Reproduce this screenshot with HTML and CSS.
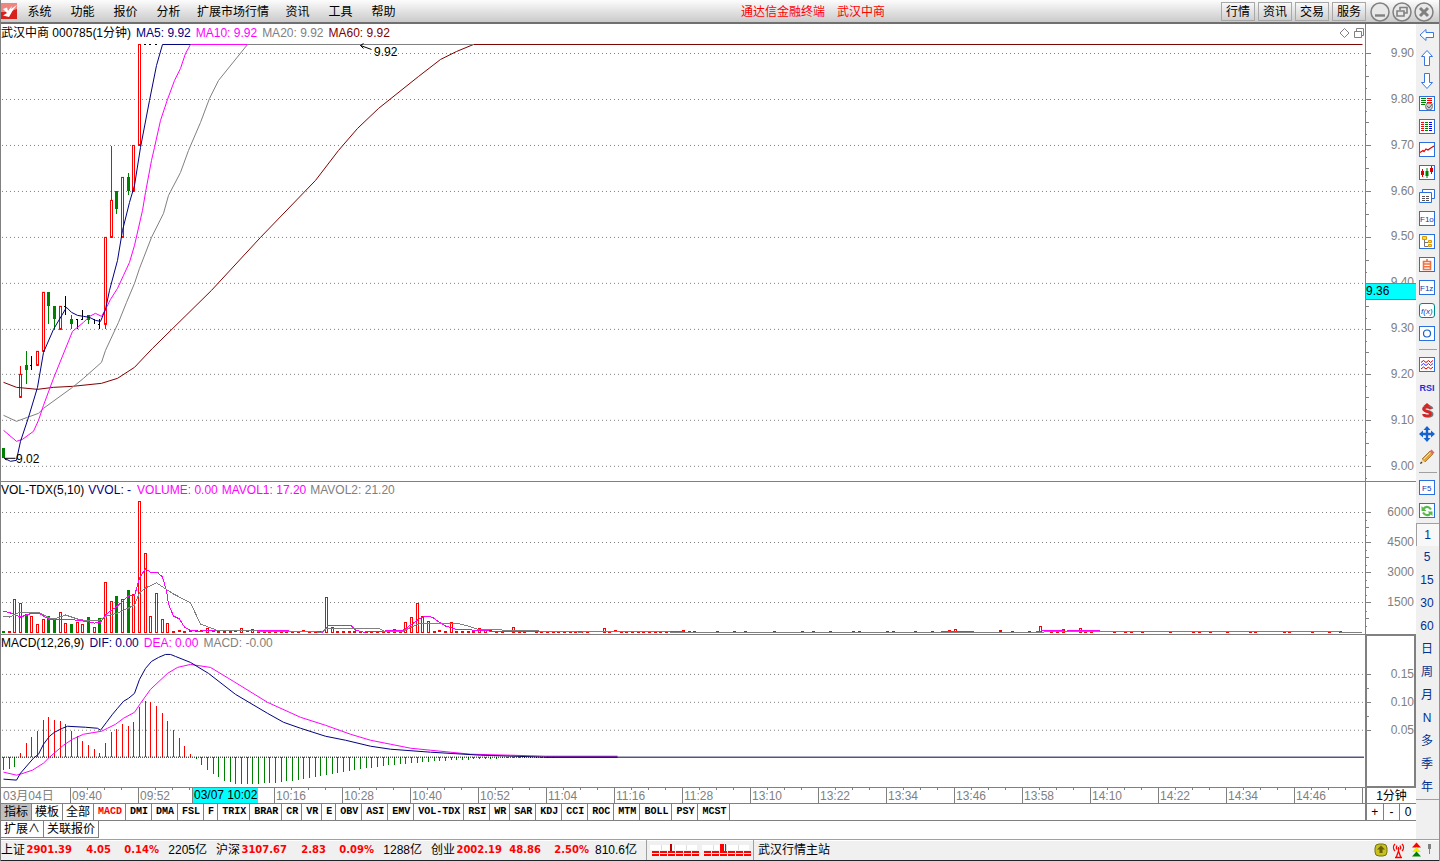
FILE: index.html
```html
<!DOCTYPE html>
<html lang="zh-CN">
<head>
<meta charset="utf-8">
<title>通达信金融终端 武汉中商</title>
<link rel="stylesheet" href="styles.css">
</head>
<body>
<header class="titlebar">
  <svg class="logo" viewBox="0 0 16 16" aria-hidden="true"><rect width="16" height="16" fill="#d8201c"/><path d="M0 0H16V6L8 9L0 9Z" fill="#ee8580"/><path d="M2 6L6 4.500L7 8L11 3L10 6L16 2L12 7L8 14L2 12.500L6 10Z" fill="#fff"/></svg>
  <nav class="menu">
    <button>系统</button><button>功能</button><button>报价</button><button>分析</button><button>扩展市场行情</button><button>资讯</button><button>工具</button><button>帮助</button>
  </nav>
  <h1 class="title"><span>通达信金融终端</span><span>武汉中商</span></h1>
  <div class="quick">
    <button>行情</button><button>资讯</button><button>交易</button><button>服务</button>
  </div>
  <div class="window-buttons">
    <button aria-label="最小化"><svg viewBox="0 0 20 20"><circle cx="10" cy="10" r="9" /><path d="M5 13.5H15" stroke-width="2.4"/></svg></button>
    <button aria-label="还原"><svg viewBox="0 0 20 20"><circle cx="10" cy="10" r="9"/><path d="M8 8V5.500H15V11H12M5 9H12V14H5Z" stroke-width="1.6"/></svg></button>
    <button aria-label="关闭"><svg viewBox="0 0 20 20"><circle cx="10" cy="10" r="9"/><path d="M6 6L14 14M14 6L6 14" stroke-width="3"/></svg></button>
  </div>
</header>

<main class="workspace">
  <div class="charts">
    <section class="panel panel-price">
      <svg class="plot" id="price" viewBox="1 24 1364 457" preserveAspectRatio="none"></svg>
      <div class="legend">
        <span>武汉中商 000785(1分钟)</span><span class="navy">MA5: 9.92</span><span class="pink">MA10: 9.92</span><span class="gray">MA20: 9.92</span><span class="maroon">MA60: 9.92</span>
        <svg class="corner" viewBox="0 0 26 12" aria-hidden="true"><path d="M5.500 1.500L10 6L5.500 10.500L1 6ZM15.500 4.500H22.500V10.500H15.500ZM17.500 4V1.500H24.500V8.500H23"/></svg>
      </div>
      <span class="note note-high">9.92</span>
      <span class="note note-low">9.02</span>
      <div class="axis">
        <svg class="ticks" id="price-axis" viewBox="1365 24 51 457" preserveAspectRatio="none"></svg>
        <ol class="scale scale-price"><li>9.90</li><li>9.80</li><li>9.70</li><li>9.60</li><li>9.50</li><li>9.40</li><li>9.30</li><li>9.20</li><li>9.10</li><li>9.00</li></ol>
        <span class="cursor-price">9.36</span>
      </div>
    </section>
    <section class="panel panel-volume">
      <svg class="plot" id="volume" viewBox="1 482 1364 152" preserveAspectRatio="none"></svg>
      <div class="legend"><span>VOL-TDX(5,10)</span><span class="navy wide">VVOL: -</span><span class="pink">VOLUME: 0.00</span><span class="pink">MAVOL1: 17.20</span><span class="gray">MAVOL2: 21.20</span></div>
      <div class="axis">
        <svg class="ticks" id="volume-axis" viewBox="1365 482 51 152" preserveAspectRatio="none"></svg>
        <ol class="scale scale-volume"><li>6000</li><li>4500</li><li>3000</li><li>1500</li></ol>
      </div>
    </section>
    <section class="panel panel-macd">
      <svg class="plot" id="macd" viewBox="1 635 1364 152" preserveAspectRatio="none"></svg>
      <div class="legend"><span>MACD(12,26,9)</span><span class="navy">DIF: 0.00</span><span class="pink">DEA: 0.00</span><span class="gray">MACD: -0.00</span></div>
      <div class="axis axis-boxed">
        <svg class="ticks" id="macd-axis" viewBox="1365 635 51 152" preserveAspectRatio="none"></svg>
        <ol class="scale scale-macd"><li>0.15</li><li>0.10</li><li>0.05</li></ol>
      </div>
    </section>
    <div class="timeline">
      <ol class="times">
        <li class="date">03月04日</li><li>09:40</li><li>09:52</li><li><span class="cursor-time">03/07 10:02</span></li><li>10:16</li><li>10:28</li><li>10:40</li><li>10:52</li><li>11:04</li><li>11:16</li><li>11:28</li><li>13:10</li><li>13:22</li><li>13:34</li><li>13:46</li><li>13:58</li><li>14:10</li><li>14:22</li><li>14:34</li><li>14:46</li><li class="rest"></li>
      </ol>
      <span class="period">1分钟</span>
    </div>
    <div class="tabs">
      <button class="cn active">指标</button><button class="cn">模板</button><button class="cn">全部</button><button class="red">MACD</button><button>DMI</button><button>DMA</button><button>FSL</button><button>F</button><button>TRIX</button><button>BRAR</button><button>CR</button><button>VR</button><button>E</button><button>OBV</button><button>ASI</button><button>EMV</button><button>VOL-TDX</button><button>RSI</button><button>WR</button><button>SAR</button><button>KDJ</button><button>CCI</button><button>ROC</button><button>MTM</button><button>BOLL</button><button>PSY</button><button>MCST</button>
      <div class="zoomer"><button>+</button><button>-</button><button>0</button></div>
    </div>
    <div class="tabs tabs-extra"><button class="cn">扩展∧</button><button class="cn">关联报价</button></div>
  </div>

  <aside class="toolbar">
    <button aria-label="返回"><svg viewBox="0 0 16 16"><path class="b" d="M1 8L7 2.500V5.500H14.500V10.500H7V13.500Z"/></svg></button>
    <button aria-label="上移"><svg viewBox="0 0 16 16"><path class="b" d="M8 .5L13.500 6.500H10.500V15.500H5.500V6.500H2.500Z"/></svg></button>
    <button aria-label="下移"><svg viewBox="0 0 16 16"><path class="b" d="M8 15.500L13.500 9.500H10.500V.5H5.500V9.500H2.500Z"/></svg></button>
    <button aria-label="报价列表"><svg viewBox="0 0 16 16"><rect class="f" x=".5" y=".5" width="15" height="14"/><path stroke="#008000" d="M2 2.500H7M2 4.500H7M2 6.500H7M2 8.500H6"/><path stroke="red" d="M8 2.500H13M8 4.500H13M8 6.500H13"/><circle cx="10" cy="10.500" r="3.500" fill="#ccc" stroke="#777"/><path stroke="#666" d="M8 10L10 12L14 7.500"/></svg></button>
    <button aria-label="行情表"><svg viewBox="0 0 16 16"><rect class="f" x=".5" y=".5" width="15" height="14"/><path stroke="red" d="M2 3.500H5M2 5.500H5M2 7.500H5M2 9.500H5M2 11.500H5"/><path stroke="#008000" d="M6 3.500H9M6 5.500H9M6 7.500H9M6 9.500H9M6 11.500H9"/><path stroke="#00f" d="M10 3.500H13M10 5.500H13M10 7.500H13M10 9.500H13M10 11.500H13"/></svg></button>
    <button aria-label="分时图"><svg viewBox="0 0 16 16"><rect class="f" x=".5" y=".5" width="15" height="14"/><path stroke="#d00" stroke-width="1.200" d="M1 10.500L4 8.500L5 9.500L7 7L9 8L11 6.500L15 4"/></svg></button>
    <button aria-label="K线图"><svg viewBox="0 0 16 16"><rect class="f" x=".5" y=".5" width="15" height="14"/><path stroke="#d00" d="M3.500 4V12M12.500 1V9"/><path stroke="#008000" d="M8 3V13"/><path stroke="#d00" stroke-width="3" d="M3.500 6V10M12.500 3V7"/><path stroke="#008000" stroke-width="3" d="M8 6V11"/></svg></button>
    <button aria-label="多窗口"><svg viewBox="0 0 16 16"><path class="f" d="M3.500 1.500H15.500V10.500H3.500Z"/><path class="f" d="M.5 4.500H12.500V14.500H.5Z"/><path stroke="#555" d="M3 8.500H6M7 8.500H10M3 10.500H6M7 10.500H10M3 12.500H6M7 12.500H10"/></svg></button>
    <button aria-label="基本资料"><svg viewBox="0 0 16 16"><rect class="f" x=".5" y=".5" width="15" height="14"/><text x="1" y="11">F1o</text></svg></button>
    <button aria-label="板块树"><svg viewBox="0 0 16 16"><rect class="f" x=".5" y=".5" width="15" height="14"/><path stroke="#777" d="M5.500 5V12.500H9M6 8.500H9"/><path fill="#fd4" stroke="#d90" d="M3.500 2.500H7.500V5.500H3.500ZM9.500 6.500H12.500V8.500H9.500ZM9.500 10.500H12.500V12.500H9.500Z"/></svg></button>
    <button aria-label="自选股"><svg viewBox="0 0 16 16"><rect class="f" x=".5" y=".5" width="15" height="14"/><path stroke="#f07040" stroke-width="1.600" d="M4.500 4.500H11.500V12.500H4.500ZM4.500 7H11.500M4.500 9.800H11.500M8 2V4.500"/></svg></button>
    <button aria-label="委托"><svg viewBox="0 0 16 16"><rect class="f" x=".5" y=".5" width="15" height="14"/><text x="1" y="11">F1z</text></svg></button>
    <button aria-label="公式"><svg viewBox="0 0 16 16"><rect x=".5" y=".5" width="15" height="14" rx="2.500" fill="#fff" stroke="#088"/><text class="fx" x="2" y="11">f(x)</text></svg></button>
    <button aria-label="圆形"><svg viewBox="0 0 16 16"><rect class="f" x=".5" y=".5" width="15" height="14"/><circle cx="8" cy="7.500" r="3.500" fill="none" stroke="#1660c8" stroke-width="1.200"/></svg></button>
    <hr>
    <button aria-label="波形"><svg viewBox="0 0 16 16"><rect class="f" x=".5" y=".5" width="15" height="14"/><path stroke="#d00" d="M2 5.500L4.500 3.500L7 5.500L9.500 3.500L11.500 5.500L14 3.500"/><path stroke="#33f" d="M2 8.500L4.500 6.500L7 8.500L9.500 6.500L11.500 8.500L14 6.500"/><path stroke="#d00" d="M2 12L4.500 10L7 12L9.500 10L11.500 12L14 10"/></svg></button>
    <button class="rsi">RSI</button>
    <button aria-label="除权"><svg viewBox="0 0 16 16"><path stroke="#777" stroke-width="3" d="M13 6C12 3 5 3 5 6C5 9 13 8 13 11C13 14 5 14 5 11"/><path stroke="#d22" stroke-width="2.400" d="M11.500 6C10.500 3.500 4.500 3.500 4.500 6C4.500 9 11.500 8 11.500 11C11.500 13.500 4.500 13.500 4.500 11"/><path fill="#d22" d="M4.500 3L8 0L11.500 3Z"/></svg></button>
    <button aria-label="移动"><svg viewBox="0 0 16 16"><path fill="#1663d0" d="M8 0L11.500 4H9.200V6.800H12V4.500L16 8L12 11.500V9.200H9.200V12H11.500L8 16L4.500 12H6.800V9.200H4V11.500L0 8L4 4.500V6.800H6.800V4H4.500Z"/></svg></button>
    <button aria-label="画线"><svg viewBox="0 0 16 16"><path fill="#eba135" stroke="#8b5a20" stroke-width=".7" d="M3 10L11 2L14 5L6 13Z"/><path fill="#f4d9a8" d="M3 10L6 13L1.500 14.500Z"/><path fill="#222" d="M2 12.500L3.500 14L1 15Z"/><path fill="#d76a6a" d="M10.500 2.500L12.500 .5L15.500 3.500L13.500 5.500Z"/><path stroke="#ffe28a" d="M5 10L11.500 3.500"/></svg></button>
    <hr>
    <button aria-label="切换"><svg viewBox="0 0 16 16"><rect class="f" x=".5" y=".5" width="15" height="14"/><text x="3" y="11">F5</text></svg></button>
    <button aria-label="刷新"><svg viewBox="0 0 16 16"><rect class="f" x=".5" y=".5" width="15" height="14"/><path stroke="#58b848" stroke-width="2.200" d="M12 6.500C10 3 6 3 4.500 6M4 9.500C6 13 10 13 11.500 10"/><path fill="#58b848" d="M2.500 3V8H7.500ZM13.500 13V8.500H8.500Z"/></svg></button>
    <button class="pressed">1</button><button>5</button><button>15</button><button>30</button><button>60</button><button>日</button><button>周</button><button>月</button><button>N</button><button>多</button><button>季</button><button>年</button>
    <hr class="end">
  </aside>
</main>

<footer class="status">
  <div class="quote"><span>上证</span><b>2901.39</b><b>4.05</b><b>0.14%</b><span>2205亿</span></div>
  <div class="quote"><span>沪深</span><b>3107.67</b><b>2.83</b><b>0.09%</b><span>1288亿</span></div>
  <div class="quote"><span>创业</span><b>2002.19</b><b>48.86</b><b>2.50%</b><span>810.6亿</span></div>
  <svg class="meter" viewBox="0 0 106 20" aria-hidden="true"><path stroke="#fff" stroke-width="5" d="M3 7.500H50M55 7.500H102"/><path stroke="#ddd" d="M14.500 5V10M27.500 5V10M39.500 5V10M66.500 5V10M79.500 5V10M91.500 5V10"/><path stroke="red" stroke-width="2" stroke-dasharray="7 1" d="M5 12H52M57 12H104M5 15H52M57 15H104"/><path stroke="#b00" stroke-width="2" d="M24 4V11"/><path stroke="red" stroke-width="4" d="M75 4V11"/><path stroke="#008000" d="M78.500 4V11"/></svg>
  <span class="station">武汉行情主站</span>
  <svg class="tray" viewBox="0 0 62 18" aria-hidden="true"><rect x="1" y="3" width="12" height="12" rx="4" fill="#c8c020" stroke="#77720c"/><path fill="#666008" d="M7 4.500L11 8.500H8.500V12H5.500V8.500H3Z"/><path fill="none" stroke="red" stroke-width="1.300" d="M21 3C19 5 19 8 21 10M28 3C30 5 30 8 28 10M23 4.500C22 6 22 7 23 8.500M26 4.500C27 6 27 7 26 8.500M24.500 6V12M22 17L24.500 10L27 17M21 16.500H28"/><path fill="red" d="M38 6.500L42.500 1.500L47 6.500Z"/><path fill="#ee0" d="M38 11L42.500 6L47 11Z"/><path fill="#008000" d="M38 15.500L42.500 10.500L47 15.500Z"/><path stroke="#808080" d="M55.500 8V13"/><rect x="54" y="3" width="3" height="5" fill="#808080"/></svg>
</footer>
<script src="chart.js"></script>
</body>
</html>
```
FILE: styles.css
```css
* { box-sizing: border-box; }

body {
  margin: 0;
  min-height: 100vh;
  display: flex;
  flex-direction: column;
  background: #fff;
  color: #000;
  font: 12px/16px "Liberation Sans", "Noto Sans CJK SC", sans-serif;
  border-left: 1px solid #808080;
  border-right: 1px solid #8494a0;
}

button {
  margin: 0;
  padding: 0;
  border: 0;
  background: none;
  color: inherit;
  font: inherit;
  white-space: nowrap;
}

svg { display: block; }
ol { margin: 0; padding: 0; list-style: none; }

.navy { color: #000080; }
.pink { color: #f0f; }
.gray { color: #808080; }
.maroon { color: #800000; }

/* Title bar */
.titlebar {
  height: 24px;
  padding-top: 1px;
  display: flex;
  align-items: center;
  background: linear-gradient(#fcfcfc, #cacaca);
  border-bottom: 2px solid #707070;
}
.logo { width: 16px; height: 16px; margin: 0 1px 2px 0; }
.menu { display: flex; }
.menu button { min-width: 43px; padding: 0 7px; }
.title {
  flex: 1;
  display: flex;
  justify-content: center;
  gap: 12px;
  margin: 0;
  color: red;
  font-size: 12px;
  font-weight: normal;
}
.quick { display: flex; gap: 3px; margin-right: 4px; }
.quick button {
  width: 34px;
  height: 19px;
  border: 1px solid #a8a8a8;
  background: linear-gradient(#f8f8f8, #cfcfcf);
}
.window-buttons { display: flex; gap: 2px; margin-right: 5px; }
.window-buttons svg {
  width: 20px;
  height: 20px;
  fill: #e8e8e8;
  stroke: #808080;
  stroke-width: 1.5;
}
.window-buttons path { fill: none; }

/* Work area */
.workspace { flex: 1; display: flex; }
.charts { flex: 1; min-width: 0; display: flex; flex-direction: column; }

.panel {
  position: relative;
  min-height: 0;
  display: grid;
  grid-template-columns: minmax(0, 1fr) 51px;
  grid-template-rows: minmax(0, 1fr);
}
.panel-price { flex: 458 1 0; border-bottom: 1px solid #808080; }
.panel-volume { flex: 153 1 0; border-bottom: 1px solid #808080; }
.panel-macd { flex: 152 1 0; }

.plot, .ticks {
  width: 100%;
  height: 100%;
  min-height: 0;
  grid-area: 1 / 1;
  fill: none;
  shape-rendering: crispEdges;
}
.legend {
  grid-area: 1 / 1;
  align-self: start;
  display: flex;
  gap: 5px;
  white-space: nowrap;
}
.panel-price .legend { padding-top: 1px; }
.panel-volume .legend { gap: 4px; }
.legend .wide { margin-right: 2px; }
.corner {
  width: 26px;
  height: 12px;
  margin: 2px 0 0 auto;
  fill: none;
  stroke: #808080;
}
.note { position: absolute; }
.note-high { left: 373px; top: 20px; }
.note-low { left: 15px; bottom: 14px; }

.axis {
  grid-area: 1 / 2;
  position: relative;
  display: grid;
  grid-template-rows: minmax(0, 1fr);
  color: #808080;
}
.axis-boxed::after {
  content: "";
  position: absolute;
  inset: -1px 0 -1px 0;
  border: 2px solid #808080;
}
.scale {
  grid-area: 1 / 1;
  display: flex;
  flex-direction: column;
  justify-content: space-between;
  padding-right: 2px;
  text-align: right;
}
.scale-price { padding-top: 21px; padding-bottom: 7px; }
.scale-volume { padding-top: 22px; padding-bottom: 24px; }
.scale-macd { padding-top: 31px; padding-bottom: 49px; }
.cursor-price {
  position: absolute;
  left: 1px;
  right: 0;
  top: 259px;
  border: solid #808080;
  border-width: 1px 0;
  background: #0ff;
  color: #000;
  line-height: 15px;
}

.timeline {
  display: flex;
  height: 16px;
  border-top: 1px solid #808080;
  color: #808080;
  line-height: 16px;
}
.times { flex: 1; display: flex; }
.times li {
  flex: 1 0 0;
  position: relative;
  padding-left: 1px;
  border-left: 1px solid #808080;
  background: linear-gradient(90deg, transparent 16px, #808080 16px) 0 0 / 17px 2px repeat-x;
}
.times .date { flex: 0 0 69px; border: 0; padding-left: 2px; background: none; }
.times .rest { flex: 0 0 3px; background: none; }
.cursor-time {
  position: absolute;
  left: -15px;
  top: 0;
  padding: 0 1px;
  border-left: 1px solid #808080;
  background: #0ff;
  color: #000;
  line-height: 15px;
  white-space: nowrap;
}
.period {
  width: 51px;
  border-left: 2px solid #808080;
  color: #000;
  text-align: center;
}

.tabs { display: flex; height: 17px; border-top: 1px solid #808080; }
.tabs button {
  padding: 0 3px 0 4px;
  border-right: 1px solid #808080;
  font: bold 10px/16px "Liberation Mono", "Noto Sans CJK SC", monospace;
}
.tabs .cn { padding: 0 3px; font: 12px/16px "Liberation Sans", "Noto Sans CJK SC", sans-serif; }
.tabs .active { background: #c0c0c0; }
.tabs .red { color: red; }
.zoomer {
  width: 51px;
  margin-left: auto;
  display: flex;
  border-left: 2px solid #808080;
}
.tabs .zoomer button { flex: 1; padding: 0; font: 12px/16px "Liberation Sans", sans-serif; }
.tabs .zoomer button:last-child { border: 0; }
.tabs-extra { height: 19px; padding-bottom: 1px; }
.tabs-extra button { border-bottom: 1px solid #808080; }

/* Tool column */
.toolbar {
  width: 23px;
  display: flex;
  flex-direction: column;
  background: #f0f0f0;
  color: #003090;
}
.toolbar button {
  height: 23px;
  display: flex;
  align-items: center;
  justify-content: center;
  padding: 0 1px 1px 0;
}
.toolbar svg { width: 16px; height: 16px; fill: none; overflow: visible; }
.toolbar .f { fill: #fff; stroke: #2a70e0; }
.toolbar .b { fill: #fff; stroke: #3a78e0; }
.toolbar text { fill: #1238b8; font: 8px "Liberation Sans", sans-serif; }
.toolbar .fx { font: italic 8px "Liberation Sans", sans-serif; }
.toolbar .rsi { color: #2030d8; font-size: 9px; font-weight: bold; }
.toolbar .pressed { background: #f8f8f8; border: solid #a0a0a0; border-width: 1px 0 0 1px; }
.toolbar hr {
  width: 18px;
  height: 1px;
  margin: 3px auto 4px;
  border: 0;
  background: #a0a0a0;
}
.toolbar .end { width: 100%; margin: 0; }

/* Status bar */
.status {
  height: 22px;
  display: flex;
  align-items: center;
  border-top: 1px solid #a0a0a0;
  border-bottom: 1px solid #202428;
  background: #f0f0f0;
  box-shadow: inset 0 1px #fff;
}
.quote {
  width: 215px;
  display: grid;
  grid-template-columns: 24px 47px 39px 48px 48px;
  text-align: right;
}
.quote b { color: red; font: bold 10px/16px "DejaVu Sans", sans-serif; }
.meter { width: 108px; height: 20px; border: solid #a0a0a0; border-width: 0 1px; fill: none; }
.station { margin-left: 4px; }
.tray { width: 62px; height: 18px; margin: 0 3px 0 auto; }
```
FILE: chart.js
```javascript
const STEP = 17 / 3;
const barX = i => Math.floor(3.5 + i * STEP);
const RED = '#ff0000', GREEN = '#008000', BLACK = '#000', GRAY = '#808080';

function add(id, name, attrs) {
  const node = document.createElementNS('http://www.w3.org/2000/svg', name);
  for (const key in attrs) node.setAttribute(key, attrs[key]);
  document.getElementById(id).appendChild(node);
}
const box = (id, x, y, width, height, fill) => add(id, 'rect', { x, y, width, height, fill });
const line = (id, color, points) => add(id, 'polyline', {
  stroke: color,
  points: points.trim().split(/\s+/).map(p => p.split(',').map(v => +v + 0.5).join(',')).join(' ')
});
const grid = (id, y) => add(id, 'path', { stroke: GRAY, 'stroke-dasharray': '1 3', d: `M2 ${y + 0.5}H1364` });

function hollow(id, x, top, bottom) {
  add(id, 'rect', { x: x - 0.5, y: top + 0.5, width: 2, height: Math.max(1, bottom - top - 1), fill: '#fff', stroke: RED });
}

function axis(id, top, bottom, majors, pitch, parts) {
  box(id, 1365, top, 1, bottom - top, GRAY);
  majors.forEach((y, n) => {
    box(id, 1366, y, 5, 1, GRAY);
    for (let k = 1; k < parts; k++) {
      const minor = Math.round(y + k * pitch / parts);
      if (minor < bottom && (parts > 2 || n < majors.length - 1)) box(id, 1366, minor, k * 2 === parts ? 3 : 1, 1, GRAY);
    }
  });
}

/* Price */
const priceLevels = [53, 99, 145, 191, 237, 283, 329, 374, 420, 466];
priceLevels.forEach(y => grid('price', y));
axis('price-axis', 24, 481, priceLevels, 46, 4);

// [bar, kind, wick top, body top, body bottom, wick bottom]
[
  [0, 'g', 448, 448, 458, 458], [3, 'r', 366, 374, 398, 398], [4, 'g', 351, 365, 370, 384],
  [5, 'k', 356, 365, 366, 370], [6, 'r', 351, 351, 366, 366], [7, 'r', 292, 292, 352, 352],
  [8, 'g', 292, 292, 306, 324], [9, 'g', 306, 306, 319, 330], [10, 'r', 306, 306, 330, 330],
  [11, 'k', 296, 306, 307, 315], [12, 'g', 315, 319, 324, 329], [13, 'k', 319, 319, 320, 329],
  [14, 'k', 310, 319, 320, 320], [15, 'g', 315, 315, 320, 324], [16, 'k', 319, 319, 320, 324],
  [17, 'k', 319, 324, 325, 329], [18, 'r', 237, 237, 325, 329], [19, 'r', 146, 200, 238, 238],
  [20, 'g', 191, 191, 209, 214], [21, 'r', 177, 177, 238, 238], [22, 'g', 173, 177, 191, 195],
  [23, 'r', 145, 145, 192, 192], [24, 'r', 44, 44, 146, 146]
].forEach(([i, kind, high, top, bottom, low]) => {
  const x = barX(i);
  box('price', x, high, 1, low - high, { r: RED, g: GREEN, k: BLACK }[kind]);
  if (kind === 'r') hollow('price', x, top, bottom);
  if (kind === 'g') box('price', x - 1, top, 3, bottom - top, GREEN);
  if (kind === 'k') box('price', x - 1, top, 2, 1, BLACK);
});
for (let i = 25; i < 28; i++) box('price', barX(i) - 1, 44, 2, 1, BLACK);

line('price', '#800000', '3,382 16,387 37,389 53,387 72,386 101,383 117,378 134,367 152,348 211,290 260,237 315,180 338,150 357,128 378,108 418,76 440,59 456,51 473,44 1362,44');
line('price', GRAY, '3,415 16,421 27,417 38,413 43,408 72,387 83,378 101,362 105,350 118,322 126,302 134,283 139,268 151,237 163,213 168,195 180,172 188,150 200,122 209,98 218,80 247,44 473,44');
line('price', '#f0f', '3,430 16,441 22,439 33,431 38,420 43,405 53,378 72,331 83,322 89,316 95,313 101,316 105,309 110,299 117,288 123,275 129,262 134,245 142,210 145,192 151,160 154,147 160,120 167,99 174,80 180,68 185,53 190,44 247,44');
line('price', '#000080', '4,458 10,461 16,460 17,455 20,441 28,417 37,387 43,352 53,329 66,307 71,312 77,315 83,316 89,317 95,320 100,321 105,309 109,290 117,260 122,230 129,202 134,185 140,147 149,100 156,65 162,44 190,44');
line('price', BLACK, '371,49 360,45 363,48');
line('price', BLACK, '360,45 363,43');
line('price', BLACK, '15,458 4,458 6,460');

/* Volume */
const volumeLevels = [512, 542, 572, 602];
volumeLevels.forEach(y => grid('volume', y));
axis('volume-axis', 482, 634, volumeLevels, 30, 4);

const volumeTops = [
  630, 631, 599, 603, 613, 615, 623, 618, 615, 618, 611, 622, 623, 621, 623, 616, 626, 617, 582, 601,
  596, 599, 590, 594, 501, 553, 615, 593, 618, 622, 630, 629, 631, 629, 629, 629, 627, 629, 630, 630,
  630, 629, 627, 629, 628, 631, 630, 630, 630, 631, 630, 631, 630, 629, 630, 631, 631, 597, 626, 630,
  631, 630, 630, 631, 631, 631, 630, 631, 630, 628, 631, 621, 616, 603, 615, 620, 630, 629, 630, 621,
  631, 631, 631, 630, 627, 628, 629, 631, 630, 629, 626, 631, 631, 629, 630, 630, 631, 631, 630, 631,
  631, 631, 631, 631, 0, 0, 627, 631, 629, 630, 631, 630, 631, 630, 630, 631, 631, 631, 631, 631, 629, 631
];
const greenVolumes = [0, 4, 8, 9, 12, 15, 17, 20, 22];
const laterVolumes = { 167: 629, 168: 628, 171: 630, 176: 629, 183: 625, 185: 630, 187: 628, 190: 627, 193: 629, 198: 630, 210: 630 };
for (let i = 0; i < 240; i++) {
  const sparse = i % 5 === 1 || i % 7 === 3 ? 631 : 0;
  const top = i < volumeTops.length ? volumeTops[i] : laterVolumes[i] || sparse;
  if (!top) continue;
  const x = barX(i);
  if (greenVolumes.includes(i)) box('volume', x - 1, top, 3, 632 - top, GREEN);
  else if (top > 628) box('volume', x - 1, Math.min(top, 630), 3, 2, RED);
  else hollow('volume', x, top, 632);
}
line('volume', '#f0f', '3,610 10,612 20,616 32,612 38,612 48,618 67,618 83,620 94,622 100,621 106,613 117,605 128,595 134,595 139,577 145,568 151,572 157,572 162,576 166,590 168,603 173,615 179,618 184,626 190,629 197,630 260,629 322,631 328,624 350,624 355,629 363,631 403,629 417,619 422,616 428,615 433,617 440,622 445,625 455,628 490,630 590,630 602,630 690,631 940,631 950,630 975,631 1035,631 1045,629 1065,630 1090,629 1110,631');
line('volume', GRAY, '3,615 9,616 20,611 38,611 49,617 54,618 65,614 77,618 83,619 99,619 106,615 117,612 128,607 134,604 139,592 145,587 156,582 162,586 173,593 190,602 200,623 216,629 260,630 321,631 327,627 378,627 383,630 403,630 413,625 418,623 427,622 455,622 468,625 477,628 503,629 580,631 600,630 660,630 670,631 1040,631 1080,630 1362,631');

/* MACD */
[674, 702, 730].forEach(y => grid('macd', y));
axis('macd-axis', 635, 787, [674, 702, 730], 28, 2);
const macdEnds = [
  770, 769, 767, 753, 743, 737, 731, 720, 717, 720, 721, 724, 731, 736, 741, 745, 749, 753, 743, 732,
  729, 724, 726, 722, 707, 701, 702, 706, 713, 721, 730, 738, 746, 754, 759, 765, 770, 774, 777, 781,
  782, 784, 784, 784, 784, 784, 783, 783, 783, 782
];
for (let i = 50; i < 100; i++) macdEnds.push(757 + Math.round(24 * Math.exp(-0.47 * Math.pow((i - 50) / 10, 1.35))));
macdEnds.forEach((end, i) => {
  if (end < 757) box('macd', barX(i), end, 1, 757 - end, RED);
  else box('macd', barX(i), 757, 1, end - 757, GREEN);
});
line('macd', '#f0f', '3,772 16,775 20,774 32,770 43,763 49,757 63,745 72,739 83,734 101,731 107,728 115,724 123,718 134,712 140,703 150,689 167,673 177,667 190,664 210,667 233,681 267,702 300,717 325,725 350,734 370,740 390,744 410,748 430,750 450,752 470,754 510,755 545,756 617,756');
line('macd', '#000080', '3,779 16,780 20,773 33,758 38,754 43,744 49,736 54,732 62,728 67,726 85,727 97,728 100,730 106,722 112,714 117,708 123,701 128,698 134,693 139,679 145,668 151,661 158,657 165,654 170,654 175,656 190,662 208,673 235,694 267,713 283,722 300,728 325,736 345,740 370,746 390,749 430,752 480,755 545,757 617,757');
add('macd', 'path', { stroke: BLACK, 'stroke-dasharray': '1 1', d: 'M2 757.5H545' });
add('macd', 'path', { stroke: '#000040', d: 'M545 757.5H1364' });
```
